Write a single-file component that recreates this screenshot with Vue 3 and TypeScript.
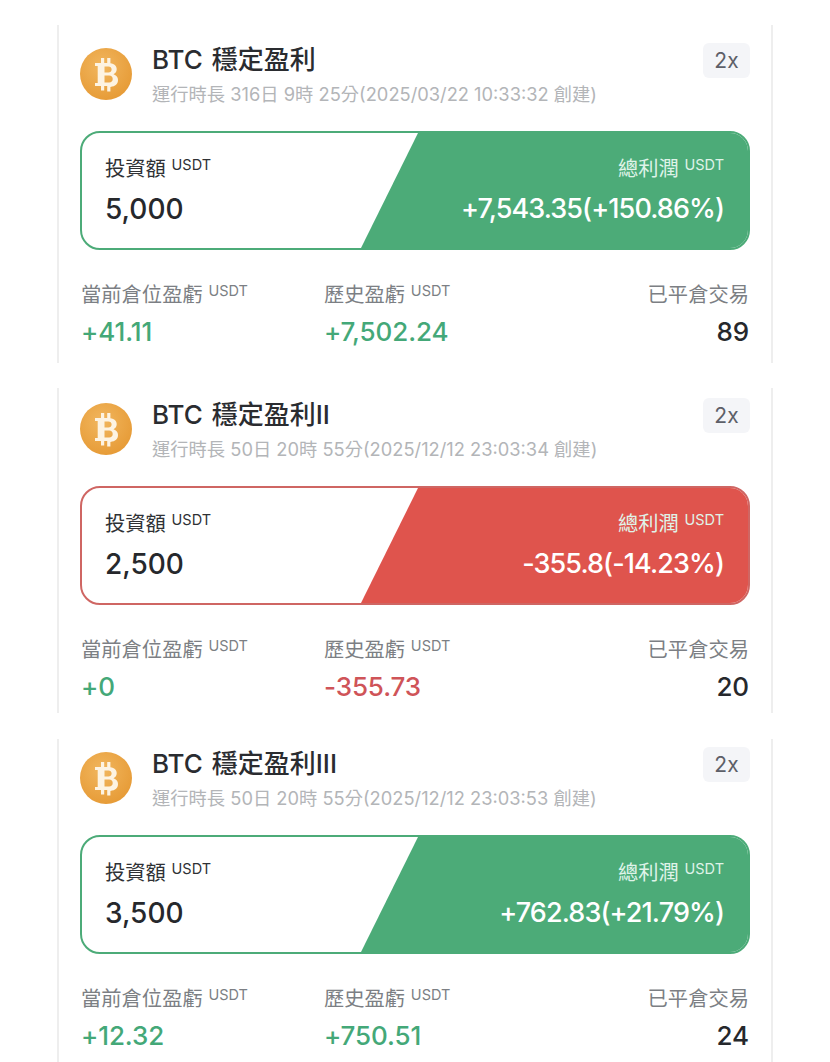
<script setup lang="ts">
interface Bot {
  name: string
  runtime: string
  invest: string
  profit: string
  loss?: boolean
  current: string
  history: string
  historyLoss?: boolean
  trades: number
}

const bots: Bot[] = [
  {
    name: 'BTC 穩定盈利',
    runtime: '運行時長 316日 9時 25分(2025/03/22 10:33:32 創建)',
    invest: '5,000',
    profit: '+7,543.35(+150.86%)',
    current: '+41.11',
    history: '+7,502.24',
    trades: 89,
  },
  {
    name: 'BTC 穩定盈利II',
    runtime: '運行時長 50日 20時 55分(2025/12/12 23:03:34 創建)',
    invest: '2,500',
    profit: '-355.8(-14.23%)',
    loss: true,
    current: '+0',
    history: '-355.73',
    historyLoss: true,
    trades: 20,
  },
  {
    name: 'BTC 穩定盈利III',
    runtime: '運行時長 50日 20時 55分(2025/12/12 23:03:53 創建)',
    invest: '3,500',
    profit: '+762.83(+21.79%)',
    current: '+12.32',
    history: '+750.51',
    trades: 24,
  },
]
</script>

<template>
  <div class="page">
    <section v-for="bot in bots" :key="bot.name" class="card">
      <header class="head">
        <svg class="coin" viewBox="0 0 52 52" aria-hidden="true">
          <defs>
            <radialGradient id="coinFill" cx="42%" cy="35%" r="70%">
              <stop offset="0%" stop-color="#f1b65e" />
              <stop offset="100%" stop-color="#e69a35" />
            </radialGradient>
          </defs>
          <circle cx="26" cy="26" r="26" fill="url(#coinFill)" />
          <path
            fill="#fdf3e2"
            fill-rule="evenodd"
            d="M15 15h6v-5h3.200v5h3v-5h3.200v5.300c4 .6 6.300 2.800 6.300 6 0 2.300-1.100 4-3.200 5 2.900.9 4.500 3 4.500 5.800 0 3.900-2.600 6.400-7.600 6.900v4.500h-3.200V38h-3v4.500H21V38h-6v-3h2.700V18H15zM24.500 18.500v6h3.800c2 0 3.300-1.100 3.300-3s-1.300-3-3.300-3zM24.500 27.500v7h4.600c2.300 0 3.600-1.300 3.600-3.500s-1.300-3.500-3.600-3.500z"
          />
        </svg>
        <div class="head-text">
          <h2 class="name">{{ bot.name }}</h2>
          <p class="runtime">{{ bot.runtime }}</p>
        </div>
        <span class="lever">2x</span>
      </header>

      <div class="summary" :class="{ loss: bot.loss }">
        <div class="slant"></div>
        <div class="cell">
          <div class="label dark">投資額 <sup>USDT</sup></div>
          <div class="amount">{{ bot.invest }}</div>
        </div>
        <div class="cell right">
          <div class="label light">總利潤 <sup>USDT</sup></div>
          <div class="amount profit">{{ bot.profit }}</div>
        </div>
      </div>

      <div class="stats">
        <div class="stat">
          <div class="label">當前倉位盈虧 <sup>USDT</sup></div>
          <div class="value up">{{ bot.current }}</div>
        </div>
        <div class="stat">
          <div class="label">歷史盈虧 <sup>USDT</sup></div>
          <div class="value" :class="bot.historyLoss ? 'down' : 'up'">{{ bot.history }}</div>
        </div>
        <div class="stat end">
          <div class="label">已平倉交易</div>
          <div class="value">{{ bot.trades }}</div>
        </div>
      </div>
    </section>
  </div>
</template>

<style>
html, body { background: #fff; }
</style>

<style scoped>
.page {
  height: 1062px;
  overflow: hidden;
  box-sizing: border-box;
  padding: 25px 57px 0;
  font-family: Inter, "Noto Sans CJK TC", sans-serif;
  color: #26282c;
}
.card {
  box-sizing: border-box;
  height: 325px;
  margin-bottom: 26px;
  padding: 13px 21px 0;
  border-left: 2px solid #eeeeee;
  border-right: 2px solid #eeeeee;
}
.card:first-child { height: 338px; margin-bottom: 25px; padding-top: 21px; }
.card:last-child { padding-top: 11px; }

.head { display: flex; align-items: flex-start; height: 85px; }
.coin { width: 52px; height: 52px; flex: none; margin-top: 2px; }
.head-text { flex: 1; margin-left: 20px; }
.name { margin: 0; font-size: 26px; line-height: 28px; font-weight: 500; word-spacing: 2px; color: #2a2c30; }
.runtime { margin: 8px 0 0; font-size: 18.300px; line-height: 24px; color: #b3b5b8; white-space: nowrap; }
.lever {
  width: 47px; height: 35px; margin-top: -3px; border-radius: 6px;
  background: #f4f5f8; color: #5d6068;
  font-size: 21px; line-height: 35px; text-align: center;
}

.summary {
  position: relative;
  display: flex;
  justify-content: space-between;
  box-sizing: border-box;
  height: 119px;
  padding: 22px 24px 0 23px;
  border: 2px solid #4cab78;
  border-radius: 20px;
  overflow: hidden;
}
.summary.loss { border-color: #cf6663; }
.slant {
  position: absolute;
  inset: 0;
  background: #4cab78;
  clip-path: polygon(336px 0, 100% 0, 100% 100%, 279px 100%);
}
.loss .slant { background: #df544d; }
.cell { position: relative; }
.right { text-align: right; }
.label { font-size: 20.300px; line-height: 28px; color: #7c7f84; white-space: nowrap; }
.label.dark { color: #2f3135; }
.label.light { color: #dff3e8; }
.label sup { font-size: 14.500px; line-height: 0; vertical-align: 6px; }
.amount { margin-top: 9px; font-size: 28px; line-height: 34px; font-weight: 500; white-space: nowrap; }
.profit { color: #fff; font-size: 27px; letter-spacing: -0.9px; }

.stats { display: flex; margin-top: 31px; padding: 0 1px; }
.stat { width: 243px; }
.stat.end { flex: 1; width: auto; text-align: right; }
.value { margin-top: 6px; font-size: 26px; line-height: 34px; font-weight: 550; letter-spacing: -0.1px; color: #26282c; }
.value.up { color: #44a878; }
.value.down { color: #cf5458; }
</style>
